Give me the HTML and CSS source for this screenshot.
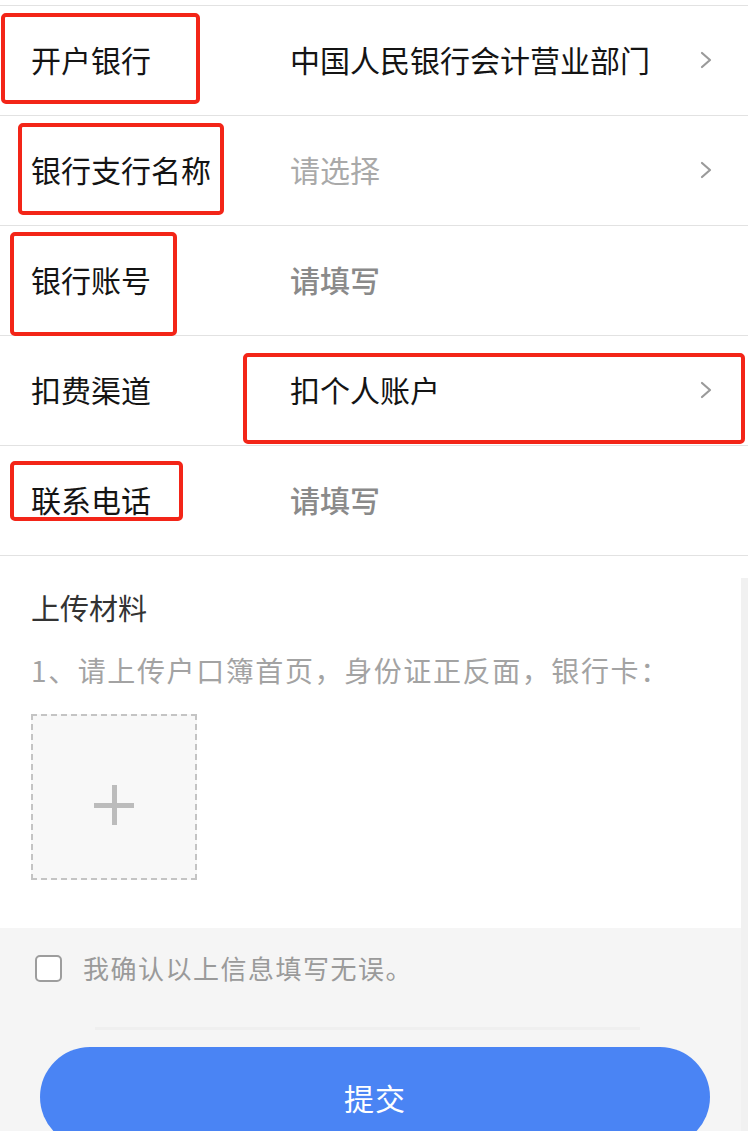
FILE: index.html
```html
<!DOCTYPE html>
<html lang="zh-CN">
<head>
<meta charset="utf-8">
<title>开户信息</title>
<link rel="stylesheet" href="styles.css">
</head>
<body>
<div class="page">
  <div class="list">
    <div class="row">
      <span class="label">开户银行</span>
      <span class="value">中国人民银行会计营业部门</span>
      <svg class="chev" viewBox="0 0 12 18" width="12" height="18"><polyline points="2,2 10,9 2,16" fill="none" stroke="#9a9a9a" stroke-width="2.2" stroke-linecap="round" stroke-linejoin="round"/></svg>
    </div>
    <div class="row">
      <span class="label">银行支行名称</span>
      <span class="value light">请选择</span>
      <svg class="chev" viewBox="0 0 12 18" width="12" height="18"><polyline points="2,2 10,9 2,16" fill="none" stroke="#9a9a9a" stroke-width="2.2" stroke-linecap="round" stroke-linejoin="round"/></svg>
    </div>
    <div class="row">
      <span class="label">银行账号</span>
      <span class="value hint">请填写</span>
    </div>
    <div class="row">
      <span class="label">扣费渠道</span>
      <span class="value">扣个人账户</span>
      <svg class="chev" viewBox="0 0 12 18" width="12" height="18"><polyline points="2,2 10,9 2,16" fill="none" stroke="#9a9a9a" stroke-width="2.2" stroke-linecap="round" stroke-linejoin="round"/></svg>
    </div>
    <div class="row">
      <span class="label">联系电话</span>
      <span class="value hint">请填写</span>
    </div>
  </div>

  <div class="upload">
    <div class="up-title">上传材料</div>
    <div class="up-desc">1、请上传户口簿首页，身份证正反面，银行卡：</div>
    <div class="up-box"><span class="plus-h"></span><span class="plus-v"></span></div>
  </div>

  <div class="footer">
    <label class="confirm"><span class="checkbox"></span><span class="confirm-text">我确认以上信息填写无误。</span></label>
    <div class="divider"></div>
    <div class="submit">提交</div>
  </div>

  <div class="scrollbar"></div>

  <div class="mark m1"></div>
  <div class="mark m2"></div>
  <div class="mark m3"></div>
  <div class="mark m4"></div>
  <div class="mark m5"></div>
</div>
</body>
</html>
```

FILE: styles.css
```css
* { box-sizing: border-box; }
html, body { margin: 0; padding: 0; background: #fff; }
body {
  font-family: "Noto Sans CJK SC", "Noto Sans", sans-serif;
  width: 748px;
  height: 1131px;
  overflow: hidden;
}
.page {
  position: relative;
  width: 748px;
  min-height: 1131px;
  padding-top: 5px;
  background: #fff;
}
.list { border-top: 1px solid #e2e2e2; }
.row {
  display: flex;
  align-items: center;
  height: 110px;
  border-bottom: 1px solid #e2e2e2;
  padding: 0 36px 4px 31px;
}
.label {
  width: 259px;
  font-size: 30px;
  line-height: 40px;
  color: #141414;
}
.value {
  flex: 1;
  font-size: 30px;
  line-height: 40px;
  color: #141414;
}
.value.light { color: #a9a9a9; }
.value.hint { color: #8a8a8a; font-weight: 500; }
.chev { display: block; margin-top: 2px; }

.upload {
  padding: 31px 31px 48px;
}
.up-title {
  font-size: 29px;
  line-height: 40px;
  color: #333;
}
.up-desc {
  margin-top: 23px;
  font-size: 28px;
  line-height: 40px;
  color: #a3a3a3;
  letter-spacing: 1.6px;
}
.up-box {
  position: relative;
  margin-top: 24px;
  width: 166px;
  height: 166px;
  border: 2px dashed #c4c4c4;
  background: #f8f8f8;
}
.plus-h, .plus-v { position: absolute; background: #bcbcbc; }
.plus-h { left: 61px; top: 87px; width: 40px; height: 5px; }
.plus-v { left: 79px; top: 69px; width: 5px; height: 40px; }

.footer {
  background: #f5f5f5;
  padding: 20px 0 0;
  height: 203px;
}
.confirm {
  display: flex;
  align-items: center;
  height: 40px;
  padding-left: 35px;
}
.checkbox {
  width: 27px;
  height: 27px;
  border: 2px solid #9d9d9d;
  border-radius: 5px;
  background: #fff;
}
.confirm-text {
  margin-left: 21px;
  font-size: 26px;
  line-height: 40px;
  color: #9a9a9a;
  letter-spacing: 1.5px;
}
.divider {
  margin: 39px 108px 0 95px;
  height: 3px;
  background: #efefef;
}
.submit {
  margin: 17px 38px 0 40px;
  height: 100px;
  border-radius: 50px;
  background: #4a84f4;
  color: #fff;
  font-size: 30px;
  display: flex;
  align-items: center;
  justify-content: center;
  letter-spacing: 1px;
}
.scrollbar {
  position: absolute;
  right: 0;
  top: 578px;
  width: 7px;
  height: 553px;
  background: #f1f1f1;
}
.mark {
  position: absolute;
  border: 4px solid #f32518;
  border-radius: 5px;
}
.m1 { left: 1px; top: 13px; width: 199px; height: 91px; }
.m2 { left: 18px; top: 123px; width: 206px; height: 92px; }
.m3 { left: 10px; top: 232px; width: 167px; height: 104px; }
.m4 { left: 243px; top: 353px; width: 502px; height: 91px; }
.m5 { left: 10px; top: 461px; width: 173px; height: 60px; }
```
